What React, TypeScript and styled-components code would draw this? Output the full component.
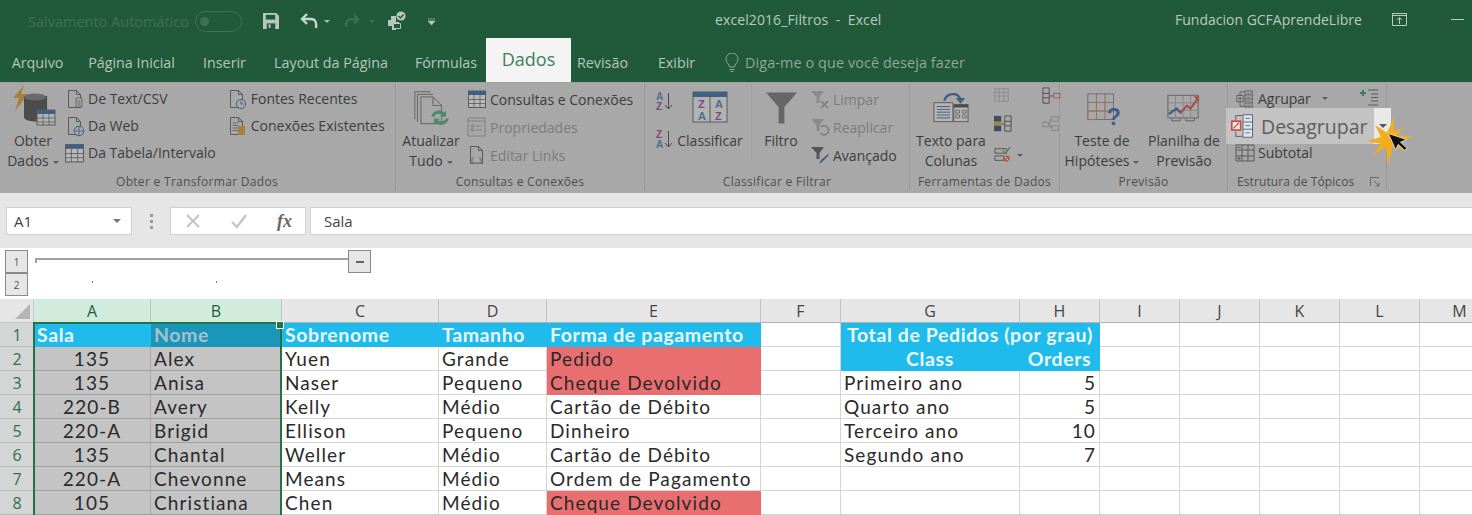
import React from 'react';
import styled, { createGlobalStyle } from 'styled-components';

const GlobalStyle = createGlobalStyle`
  html, body { margin: 0; padding: 0; background: #fff; overflow: hidden; }
  body { font-family: "Open Sans", "Noto Sans", sans-serif; }
  * { box-sizing: border-box; }
`;

const Page = styled.div`
  width: 1472px;
  height: 515px;
  overflow: hidden;
`;

/* ---------- title bar ---------- */

const TitleBar = styled.div`
  height: 38px;
  background: #215a3a;
  display: flex;
  align-items: center;
  color: #b9cabf;
  font-size: 14px;
`;

const QuickAccess = styled.div`
  width: 715px;
  display: flex;
  align-items: center;
  padding: 4px 0 0 28px;
  flex: none;
`;

const AutoSave = styled.span`
  width: 167px;
  color: #3c7353;
  font-size: 14.5px;
  white-space: nowrap;
`;

const Toggle = styled.span`
  width: 47px;
  height: 21px;
  border: 1px solid #3c7353;
  border-radius: 11px;
  display: flex;
  align-items: center;
  padding-left: 4px;
  margin-right: 21px;
  &::before {
    content: '';
    width: 9px;
    height: 9px;
    border-radius: 50%;
    background: #3c7353;
  }
`;

const QaSlot = styled.span<{ $w: number }>`
  width: ${(p) => p.$w}px;
  display: flex;
  align-items: center;
  flex: none;
`;

const Caret = styled.span<{ $c?: string; $ml?: number; $s?: number }>`
  display: inline-block;
  width: 0;
  height: 0;
  border-left: ${(p) => p.$s ?? 3.5}px solid transparent;
  border-right: ${(p) => p.$s ?? 3.5}px solid transparent;
  border-top: ${(p) => p.$s ?? 3.5}px solid ${(p) => p.$c || '#5a5a5a'};
  margin-left: ${(p) => p.$ml ?? 4}px;
  vertical-align: middle;
`;

const DocTitle = styled.span`
  white-space: pre;
  font-size: 14px;
  letter-spacing: 0.1px;
`;

const Account = styled.div`
  margin-left: auto;
  width: 297px;
  display: flex;
  align-items: center;
  flex: none;
  white-space: nowrap;
`;

const AccountName = styled.span`
  width: 217px;
  flex: none;
`;

const Minimize = styled.span`
  width: 13px;
  height: 1px;
  background: #b9cabf;
  margin-left: 44px;
  flex: none;
`;

/* ---------- tab strip ---------- */

const TabStrip = styled.div`
  height: 44px;
  background: #215a3a;
  display: flex;
  align-items: stretch;
`;

const Tab = styled.div<{ $w: number; $active?: boolean; $pl?: number }>`
  width: ${(p) => p.$w}px;
  flex: none;
  display: flex;
  justify-content: center;
  align-items: ${(p) => (p.$active ? 'flex-start' : 'center')};
  padding-top: ${(p) => (p.$active ? 9 : 5)}px;
  padding-left: ${(p) => p.$pl ?? 0}px;
  font-size: ${(p) => (p.$active ? 18 : 14.3)}px;
  color: ${(p) => (p.$active ? '#3f7f5c' : '#b5c6bb')};
  background: ${(p) => (p.$active ? '#f4f4f4' : 'transparent')};
  white-space: nowrap;
`;

const TellMe = styled.div`
  display: flex;
  align-items: center;
  padding: 5px 0 0 5px;
  color: #8fa899;
  font-size: 14.4px;
  gap: 5px;
  letter-spacing: 0.1px;
`;

/* ---------- ribbon ---------- */

const Ribbon = styled.div`
  height: 111px;
  background: #a8a8a8;
  display: flex;
  color: #3d3d3d;
  font-size: 14px;
  border-top: 1px solid #98a89e;
`;

const Group = styled.div<{ $w: number; $plain?: boolean }>`
  width: ${(p) => p.$w}px;
  flex: none;
  display: flex;
  flex-direction: column;
  padding-top: 2px;
  margin-bottom: 3px;
  border-right: ${(p) => (p.$plain ? 'none' : '1px solid #999999')};
`;

const GroupBody = styled.div`
  height: 90px;
  display: flex;
`;

const GroupLabel = styled.div<{ $pr?: number; $left?: boolean }>`
  flex: 1;
  display: flex;
  align-items: center;
  justify-content: ${(p) => (p.$left ? 'flex-start' : 'center')};
  padding-top: 2px;
  padding-right: ${(p) => p.$pr ?? 0}px;
  padding-left: ${(p) => (p.$left ? 9 : 0)}px;
  font-size: 12px;
  letter-spacing: ${(p) => (p.$left ? 0.1 : 0.3)}px;
  color: #4e4e4e;
  white-space: nowrap;
  gap: 16px;
`;

const BigButton = styled.div<{ $w: number; $ml?: number }>`
  width: ${(p) => p.$w}px;
  margin-left: ${(p) => p.$ml ?? 0}px;
  flex: none;
  display: flex;
  flex-direction: column;
  align-items: center;
  text-align: center;
  white-space: nowrap;
`;

const BigIcon = styled.div<{ $pt?: number; $pl?: number }>`
  height: 46px;
  padding-top: ${(p) => p.$pt ?? 0}px;
  padding-left: ${(p) => p.$pl ?? 0}px;
  display: flex;
  align-items: flex-start;
  justify-content: center;
  flex: none;
`;

const BigText = styled.div`
  line-height: 20px;
`;

const SmallStack = styled.div<{ $ml?: number; $mt?: number; $row?: number }>`
  margin-left: ${(p) => p.$ml ?? 0}px;
  margin-top: ${(p) => p.$mt ?? 0}px;
  flex: none;
  display: grid;
  grid-auto-rows: ${(p) => p.$row ?? 27}px;
  align-content: start;
`;

const SmallButton = styled.div<{ $off?: boolean }>`
  display: flex;
  align-items: center;
  gap: 3px;
  white-space: nowrap;
  color: ${(p) => (p.$off ? '#7c7c7c' : 'inherit')};
  position: relative;
`;

const IconSlot = styled.span`
  width: 21px;
  height: 22px;
  display: flex;
  align-items: center;
  justify-content: center;
  flex: none;
`;

const Divider = styled.div<{ $ml: number }>`
  width: 1px;
  height: 76px;
  margin-left: ${(p) => p.$ml}px;
  background: #a0a0a0;
  flex: none;
`;

const DetailSlot = styled.span`
  margin-left: 28px;
  margin-top: -4px;
  display: flex;
`;

/* the enlarged "Desagrupar" button sits on top of the ribbon rows */
const Spotlight = styled.div`
  position: absolute;
  left: -8px;
  top: -4px;
  width: 165px;
  height: 36px;
  background: #c3c3c3;
  display: flex;
  align-items: center;
  padding-left: 5px;
  color: #5d5d5d;
  font-size: 19.5px;
  gap: 6px;
  z-index: 2;
`;

const SpotlightArrow = styled.span`
  position: absolute;
  right: 0;
  top: 0;
  width: 17px;
  height: 100%;
  background: #e8e8e8;
  display: flex;
  align-items: center;
  justify-content: center;
`;

const Burst = styled.svg`
  position: absolute;
  left: 133px;
  top: 5px;
  z-index: 3;
`;

/* ---------- formula bar ---------- */

const FormulaBar = styled.div`
  height: 55px;
  background: #e6e6e6;
  display: flex;
  padding: 14px 0 13px 6px;
`;

const Field = styled.div<{ $w?: number }>`
  width: ${(p) => (p.$w ? `${p.$w}px` : 'auto')};
  flex: ${(p) => (p.$w ? 'none' : '1')};
  background: #fff;
  border: 1px solid #d0d0d0;
  display: flex;
  align-items: center;
  font-size: 15px;
  color: #444;
`;

const NameBox = styled(Field)`
  padding: 0 10px 0 7px;
  justify-content: space-between;
`;

const Grip = styled.div`
  width: 38px;
  flex: none;
  display: flex;
  flex-direction: column;
  align-items: center;
  justify-content: center;
  gap: 3px;
  & > i {
    width: 3px;
    height: 3px;
    background: #9c9c9c;
    display: block;
  }
`;

const FormulaButtons = styled(Field)`
  padding-left: 14px;
  gap: 29px;
  margin-right: 4px;
`;

const FxLabel = styled.span`
  font-family: "Liberation Serif", serif;
  font-style: italic;
  font-weight: 700;
  font-size: 18px;
  color: #666;
`;

const FormulaText = styled(Field)`
  padding-left: 13px;
  border-right: none;
`;

/* ---------- outline gutter ---------- */

const Outline = styled.div`
  height: 51px;
  background: #fff;
  display: flex;
`;

const Levels = styled.div`
  width: 35px;
  flex: none;
  padding: 2px 0 0 5px;
`;

const LevelButton = styled.div`
  width: 23px;
  height: 23px;
  background: #e6e6e6;
  border: 1px solid #8a8a8a;
  font-size: 10px;
  color: #555;
  display: flex;
  align-items: center;
  justify-content: center;
`;

const OutlineTrack = styled.div`
  padding-top: 2px;
`;

const BracketRow = styled.div`
  display: flex;
  align-items: flex-start;
`;

const Bracket = styled.div`
  width: 313px;
  height: 5px;
  margin-top: 8px;
  border-top: 2px solid #a0a0a0;
  border-left: 2px solid #a0a0a0;
`;

const Collapse = styled.div`
  width: 23px;
  height: 23px;
  background: #e6e6e6;
  border: 1px solid #8a8a8a;
  display: flex;
  align-items: center;
  justify-content: center;
  &::before {
    content: '';
    width: 8px;
    height: 2px;
    background: #666;
  }
`;

const DotRow = styled.div`
  display: flex;
  margin-top: 8px;
  padding-left: 57px;
  gap: 123px;
  & > i {
    width: 1px;
    height: 2px;
    background: #777;
    display: block;
  }
`;

/* ---------- sheet ---------- */

const Sheet = styled.div`
  position: relative;
  display: grid;
  grid-template-columns: 34px 117px 131px 157px 108px 214px 80px 179px 80px 80px 80px 80px 80px 80px;
  grid-auto-rows: 24px;
  background: #fff;
`;

const Corner = styled.div`
  background: #e6e6e6;
  border-right: 1px solid #c6c6c6;
  border-bottom: 1px solid #c6c6c6;
  position: relative;
  &::after {
    content: '';
    position: absolute;
    right: 3px;
    bottom: 3px;
    width: 0;
    height: 0;
    border-left: 15px solid transparent;
    border-bottom: 15px solid #b4b4b4;
  }
`;

const ColHead = styled.div<{ $sel?: boolean }>`
  background: ${(p) => (p.$sel ? '#d1ecdc' : '#e6e6e6')};
  border-right: 1px solid #c2c2c2;
  border-bottom: 1px solid ${(p) => (p.$sel ? '#217346' : '#b4b4b4')};
  color: ${(p) => (p.$sel ? '#1d5c3b' : '#444')};
  font-size: 16px;
  display: flex;
  align-items: center;
  justify-content: center;
`;

const RowHead = styled.div`
  background: #d3d6d4;
  border-bottom: 1px solid #b9b9b9;
  color: #2f6f4e;
  font-size: 16px;
  display: flex;
  align-items: center;
  justify-content: center;
`;

type Tone = 'plain' | 'head' | 'headSel' | 'sel' | 'red';

const toneBg: Record<Tone, string> = {
  plain: '#ffffff',
  head: '#1fbbec',
  headSel: '#1a96b8',
  sel: '#c4c4c4',
  red: '#e96e70',
};

const isHead = (t: Tone) => t === 'head' || t === 'headSel';

const Cell = styled.div<{ $tone: Tone; $align?: string; $span?: number }>`
  grid-column: span ${(p) => p.$span ?? 1};
  background: ${(p) => toneBg[p.$tone]};
  border-right: 1px solid ${(p) => (p.$tone === 'plain' ? '#d4d4d4' : p.$tone === 'sel' ? '#a8a8a8' : 'transparent')};
  border-bottom: 1px solid ${(p) => (p.$tone === 'plain' ? '#d4d4d4' : p.$tone === 'sel' ? '#a0a0a0' : 'transparent')};
  font-family: Lato, "Open Sans", sans-serif;
  font-size: ${(p) => (isHead(p.$tone) ? 19.5 : 19)}px;
  letter-spacing: ${(p) => (isHead(p.$tone) ? 0.6 : 1.1)}px;
  font-weight: ${(p) => (isHead(p.$tone) ? 700 : 400)};
  color: ${(p) => (p.$tone === 'head' ? '#eaf8fd' : p.$tone === 'headSel' ? '#a9bfd0' : '#2a2a2a')};
  display: flex;
  align-items: center;
  justify-content: ${(p) => p.$align || 'flex-start'};
  padding: 0 3px 1px 3px;
  white-space: nowrap;
  overflow: visible;
  position: relative;
`;

const Selection = styled.div`
  position: absolute;
  left: 33px;
  top: 23px;
  width: 249px;
  height: 200px;
  border: 2px solid #217346;
  pointer-events: none;
  &::after {
    content: '';
    position: absolute;
    right: -4px;
    top: -3px;
    width: 6px;
    height: 6px;
    background: #217346;
    border: 1px solid #fff;
  }
`;

/* ---------- icons ---------- */

const L = '#5b5b5b';
const B = '#3f5f86';
const LETTER_FONT = 'Liberation Sans';

const PageShape = ({ c = L }: { c?: string }) => (
  <path d="M3.5 1.5h8l4 4v13h-12z M11.5 1.5v4h4" fill="none" stroke={c} strokeWidth="1" />
);

const DocIcon = ({ children }: { children?: React.ReactNode }) => (
  <svg width="20" height="22" viewBox="0 0 20 20">
    <PageShape />
    {children}
  </svg>
);

const TableIcon = ({ size = 22, head = B }: { size?: number; head?: string }) => (
  <svg width={size} height={size} viewBox="0 0 20 20">
    <rect x="1.5" y="2" width="17" height="16.5" fill="#b8b8b8" stroke={L} />
    <rect x="1.5" y="2" width="17" height="4" fill={head} />
    <path d="M1.5 10.5h17M1.5 14.5h17M7 6v12.5M13 6v12.5" stroke={L} strokeWidth="0.8" />
  </svg>
);

const ObterIcon = () => (
  <svg width="48" height="44" viewBox="0 0 48 44">
    <path d="M15 0 L4 13 h6 L6 26 L19 9 h-7z" fill="#a8803c" />
    <path d="M10 12 v21 c0 6 33 6 33 0 V12z" fill="#4c4c4c" transform="translate(1 -1) scale(0.7 1) translate(10 0)" />
    <ellipse cx="26" cy="12" rx="11" ry="3.5" fill="#6a6a6a" />
    <rect x="28" y="25" width="18" height="15" fill="#b4b4b4" stroke={L} />
    <rect x="28" y="25" width="18" height="4" fill={B} />
    <path d="M28 33h18M28 37h18M34 29v11M40 29v11" stroke={L} strokeWidth="0.8" />
  </svg>
);

const RefreshIcon = () => (
  <svg width="38" height="38" viewBox="0 0 44 44">
    <path d="M1 2h18M1 2v32M4 5h18M4 5v32M8 8h14l10 10v21H8z M22 8v10h10" fill="#a8a8a8" stroke={L} />
    <path d="M20 31a9 9 0 0 1 15-5l2-2v7h-7l2-2a6 6 0 0 0-9 2z" fill="#4e8a6a" />
    <path d="M40 33a9 9 0 0 1-15 5l-2 2v-7h7l-2 2a6 6 0 0 0 9-2z" fill="#4e8a6a" />
  </svg>
);

const SortSmall = ({ up }: { up: boolean }) => (
  <svg width="20" height="22" viewBox="0 0 20 22">
    <text x="1" y="10" fontSize="10" fontWeight="700" fontFamily={LETTER_FONT} fill={up ? '#4b6d94' : '#7b4b80'}>{up ? 'A' : 'Z'}</text>
    <text x="1" y="20" fontSize="10" fontWeight="700" fontFamily={LETTER_FONT} fill={up ? '#7b4b80' : '#4b6d94'}>{up ? 'Z' : 'A'}</text>
    <path d="M13.5 3v16M10 15l3.5 4 3.5-4" fill="none" stroke="#4a4a4a" />
  </svg>
);

const SortBig = () => (
  <svg width="36" height="32" viewBox="0 0 36 32">
    <rect x="1" y="1" width="34" height="30" fill="#b2b2b2" stroke={L} />
    <rect x="1" y="1" width="34" height="5" fill={B} />
    <path d="M18 6v25" stroke={L} />
    <text x="6" y="17" fontSize="11" fontWeight="700" fontFamily={LETTER_FONT} fill="#7b4b80">Z</text>
    <text x="6" y="29" fontSize="11" fontWeight="700" fontFamily={LETTER_FONT} fill="#4b6d94">A</text>
    <text x="23" y="17" fontSize="11" fontWeight="700" fontFamily={LETTER_FONT} fill="#4b6d94">A</text>
    <text x="23" y="29" fontSize="11" fontWeight="700" fontFamily={LETTER_FONT} fill="#7b4b80">Z</text>
  </svg>
);

const FunnelBig = () => (
  <svg width="33" height="33" viewBox="0 0 34 33">
    <path d="M1 1h32L20 16v17h-6V16z" fill="#666" />
  </svg>
);

const FunnelSmall = ({ off, children }: { off?: boolean; children?: React.ReactNode }) => (
  <svg width="20" height="20" viewBox="0 0 20 20">
    <path d="M1 2h13L9.5 8v6h-3V8z" fill={off ? '#8a8a8a' : '#555'} />
    {children}
  </svg>
);

const TextColumnsIcon = () => (
  <svg width="36" height="33" viewBox="0 0 38 34">
    <rect x="1" y="13" width="20" height="20" fill="#b4b4b4" stroke={L} />
    <path d="M4 17h14M4 20h14M4 23h14M4 26h14M4 29h14" stroke="#4a5d78" />
    <rect x="22" y="15" width="15" height="18" fill="#b4b4b4" stroke={L} />
    <rect x="22" y="15" width="15" height="3" fill="#4a4a4a" />
    <path d="M24 21h4v3h-4zM31 21h4v3h-4zM24 26h4v3h-4zM31 26h4v3h-4z" fill="none" stroke={L} strokeWidth="0.8" />
    <path d="M12 11C14 3 25 1 29 9" fill="none" stroke={B} strokeWidth="2.4" />
    <path d="M24 8h10l-5 6z" fill={B} />
  </svg>
);

const ToolIcon = ({ kind }: { kind: number }) => (
  <svg width="20" height="18" viewBox="0 0 22 20">
    {kind === 0 && (
      <path d="M2 2h15v14H2zM2 6h15M2 10h15M7 2v14M12 2v14" fill="none" stroke="#8c8c8c" />
    )}
    {kind === 1 && (
      <g fill="none">
        <path d="M2 1h7v17H2zM2 7h7M2 12h7" stroke="#4a4a4a" />
        <path d="M10 10h3" stroke="#4a4a4a" />
        <rect x="14" y="7" width="7" height="5" stroke="#a8524a" />
      </g>
    )}
    {kind === 2 && (
      <g>
        <rect x="1" y="1" width="8" height="17" fill="#3d4d62" />
        <rect x="1" y="7" width="8" height="5" fill="#9a8a52" />
        <path d="M13 1h7v17h-7zM13 7h7M13 12h7" fill="none" stroke="#4a4a4a" />
        <path d="M9.5 10h3" stroke="#4a4a4a" />
      </g>
    )}
    {kind === 3 && (
      <g fill="none" stroke="#838383">
        <rect x="2" y="8" width="6" height="5" />
        <rect x="12" y="2" width="7" height="5" />
        <rect x="12" y="12" width="7" height="5" />
        <path d="M8 10h2V5h2M10 10v4h2" />
      </g>
    )}
    {kind === 4 && (
      <g>
        <path d="M2 3h13v5H2zM2 11h10v5H2z" fill="none" stroke="#555" />
        <path d="M11 5l3 3 5-7" fill="none" stroke="#4e8a6a" strokeWidth="1.6" />
        <circle cx="15" cy="14" r="3.5" fill="#b15a50" />
        <path d="M13 12l4 4" stroke="#ddd" />
      </g>
    )}
  </svg>
);

const WhatIfIcon = () => (
  <svg width="36" height="36" viewBox="0 0 42 42">
    <rect x="1" y="1" width="30" height="30" fill="none" stroke="#6d625c" />
    <path d="M1 11h30M1 21h30M11 1v30M21 1v30" stroke="#6d625c" strokeWidth="0.8" />
    <path d="M11 11h10v10H11z" fill="none" stroke="#a1705c" />
    <path d="M1 21h10v10H1z" fill="none" stroke="#a1705c" />
    <text x="23" y="37" fontSize="27" fontWeight="700" fontFamily={LETTER_FONT} fill={B}>?</text>
  </svg>
);

const ForecastIcon = () => (
  <svg width="34" height="31" viewBox="0 0 36 32">
    <rect x="1" y="2" width="32" height="24" fill="none" stroke="#606060" />
    <path d="M1 10h32M1 18h32M9 2v24M17 2v24M25 2v24" stroke="#7a7a7a" strokeWidth="0.7" />
    <path d="M2 22l8-6 5 5" fill="none" stroke={B} strokeWidth="2.4" />
    <path d="M14 21l7-8 4 3 8-11" fill="none" stroke="#a84e42" strokeWidth="2.2" />
    <path d="M28 3h6v6z" fill="#a84e42" />
    <path d="M5 26v3h9v-3M20 26v3h9v-3" fill="none" stroke="#606060" />
  </svg>
);

const OutlineRows = ({ mark }: { mark: React.ReactNode }) => (
  <svg width="18" height="20" viewBox="0 0 20 20">
    {mark}
    <rect x="10" y="1" width="8" height="18" fill="none" stroke={L} />
    <path d="M10 5.5h8M10 10h8M10 14.5h8" stroke={L} />
    <path d="M12 3.5h4M12 8h4M12 12.5h4M12 17h4" stroke={L} strokeWidth="0.8" />
  </svg>
);

const plusBox = (
  <g fill="none" stroke={L}>
    <rect x="1" y="6" width="7" height="7" />
    <path d="M2.5 9.5h4M4.5 7.5v4" />
    <path d="M4.5 6V2h5M4.5 13v5h5" />
  </g>
);

const UngroupIcon = () => (
  <svg width="24" height="24" viewBox="0 0 30 30">
    <path d="M6 8V2h8M6 22v6h8" fill="none" stroke="#4a4a4a" />
    <rect x="1" y="9" width="11" height="11" fill="#eee" stroke="#d0453a" strokeWidth="2" />
    <path d="M3 18l7-7" stroke="#d0453a" strokeWidth="1.6" />
    <rect x="15" y="1" width="12" height="28" fill="#dfe6ea" stroke="#3f4f5f" />
    <path d="M15 10h12M15 19h12" stroke="#3f4f5f" />
    <path d="M18 5.5h6M18 14.5h6M18 23.5h6" stroke="#4a7aa8" strokeWidth="1.2" />
  </svg>
);

const SubtotalIcon = () => (
  <svg width="20" height="20" viewBox="0 0 20 20">
    <path d="M1 2h18v16H1zM7 2v16M13 2v16M1 7h18M1 13h18" fill="none" stroke={L} />
    <path d="M2.5 4.5h3M2.5 15.5h3M4 14v3" stroke={L} />
  </svg>
);

const ShowDetailIcon = () => (
  <svg width="20" height="18" viewBox="0 0 20 18">
    <path d="M1 5h6M4 2v6" stroke="#3f7a5b" strokeWidth="2" />
    <path d="M9 2h10M12 6h7M12 9.5h7M12 13h7M9 17h10" stroke={L} />
  </svg>
);

const Launcher = () => (
  <svg width="10" height="10" viewBox="0 0 10 10">
    <path d="M0.5 9V0.5H9" fill="none" stroke="#666" />
    <path d="M4 4l4.5 4.5M9 5.5V9H5.5" fill="none" stroke="#666" />
  </svg>
);

const Lamp = () => (
  <svg width="16" height="20" viewBox="0 0 16 20">
    <path d="M5.5 14c0-3-3.5-4-3.5-8a6 6 0 0 1 12 0c0 4-3.5 5-3.5 8zM5.5 16.5h5M6.5 18.5h3" fill="none" stroke="#8fa899" />
  </svg>
);

const CheckOut = () => (
  <svg width="20" height="20" viewBox="0 0 20 20">
    <circle cx="14" cy="5" r="4.6" fill="#b8c6bd" />
    <path d="M11.5 5l2 2 3-3.5" fill="none" stroke="#215a3a" strokeWidth="1.4" />
    <path d="M1 9h3V5h5v6h3v4h-3v4H5v-4H1z" fill="#b8c6bd" />
    <path d="M6.5 12.5h7v5h-7z" fill="#215a3a" stroke="#b8c6bd" />
  </svg>
);

const cols = ['A', 'B', 'C', 'D', 'E', 'F', 'G', 'H', 'I', 'J', 'K', 'L', 'M'];

type Row = {
  sala: string;
  nome: string;
  sobrenome: string;
  tamanho: string;
  pagamento: string;
  classe?: string;
  orders?: string;
};

const rows: Row[] = [
  { sala: '135', nome: 'Alex', sobrenome: 'Yuen', tamanho: 'Grande', pagamento: 'Pedido' },
  { sala: '135', nome: 'Anisa', sobrenome: 'Naser', tamanho: 'Pequeno', pagamento: 'Cheque Devolvido', classe: 'Primeiro ano', orders: '5' },
  { sala: '220-B', nome: 'Avery', sobrenome: 'Kelly', tamanho: 'Médio', pagamento: 'Cartão de Débito', classe: 'Quarto ano', orders: '5' },
  { sala: '220-A', nome: 'Brigid', sobrenome: 'Ellison', tamanho: 'Pequeno', pagamento: 'Dinheiro', classe: 'Terceiro ano', orders: '10' },
  { sala: '135', nome: 'Chantal', sobrenome: 'Weller', tamanho: 'Médio', pagamento: 'Cartão de Débito', classe: 'Segundo ano', orders: '7' },
  { sala: '220-A', nome: 'Chevonne', sobrenome: 'Means', tamanho: 'Médio', pagamento: 'Ordem de Pagamento' },
  { sala: '105', nome: 'Christiana', sobrenome: 'Chen', tamanho: 'Médio', pagamento: 'Cheque Devolvido' },
];

const Blanks = ({ n }: { n: number }) => (
  <>
    {Array.from({ length: n }, (_, i) => (
      <Cell key={i} $tone="plain" />
    ))}
  </>
);

const App = () => {
  return (
    <Page>
      <GlobalStyle />
      <TitleBar>
        <QuickAccess>
          <AutoSave>Salvamento Automático</AutoSave>
          <Toggle />
          <QaSlot $w={37}>
            <svg width="16" height="16" viewBox="0 0 17 17">
              <path d="M0 0h14l3 3v14H0z" fill="#b8c6bd" />
              <path d="M3 2h10v5H3z" fill="#215a3a" />
              <path d="M4 11h9v6H4z" fill="#215a3a" />
              <path d="M6 12h2v4H6z" fill="#b8c6bd" />
            </svg>
          </QaSlot>
          <QaSlot $w={43}>
            <svg width="20" height="18" viewBox="0 0 20 18">
              <path d="M7 2L2 7l5 5" fill="none" stroke="#c9d6ce" strokeWidth="2.4" />
              <path d="M3 7h8c4 0 6 3 5 9" fill="none" stroke="#c9d6ce" strokeWidth="2.4" />
            </svg>
            <Caret $c="#a9bcb0" $ml={4} />
          </QaSlot>
          <QaSlot $w={44}>
            <svg width="17" height="16" viewBox="0 0 20 18">
              <path d="M13 2l5 5-5 5" fill="none" stroke="#3c7353" strokeWidth="2.4" />
              <path d="M17 7H9c-4 0-6 3-5 9" fill="none" stroke="#3c7353" strokeWidth="2.4" />
            </svg>
            <Caret $c="#3c7353" $ml={9} />
          </QaSlot>
          <QaSlot $w={41}>
            <CheckOut />
          </QaSlot>
          <QaSlot $w={10}>
            <svg width="7" height="7" viewBox="0 0 7 7">
              <path d="M0 1h7M0 3h7L3.5 7z" fill="#b8c6bd" stroke="#b8c6bd" strokeWidth="0.6" />
            </svg>
          </QaSlot>
        </QuickAccess>
        <DocTitle>excel2016_Filtros  -  Excel</DocTitle>
        <Account>
          <AccountName>Fundacion GCFAprendeLibre</AccountName>
          <svg width="15" height="13" viewBox="0 0 15 13">
            <path d="M.5.5h14v12H.5zM.5 2.5h14M7.5 11V5M5 7l2.5-2.5L10 7" fill="none" stroke="#b9cabf" />
          </svg>
          <Minimize />
        </Account>
      </TitleBar>

      <TabStrip>
        <Tab $w={75}>Arquivo</Tab>
        <Tab $w={113}>Página Inicial</Tab>
        <Tab $w={73}>Inserir</Tab>
        <Tab $w={140}>Layout da Página</Tab>
        <Tab $w={85} $pl={5}>Fórmulas</Tab>
        <Tab $w={85} $active>Dados</Tab>
        <Tab $w={63}>Revisão</Tab>
        <Tab $w={85}>Exibir</Tab>
        <TellMe>
          <Lamp />
          Diga-me o que você deseja fazer
        </TellMe>
      </TabStrip>

      <Ribbon>
        <Group $w={396}>
          <GroupBody>
            <BigButton $w={62} $ml={2}>
              <BigIcon><ObterIcon /></BigIcon>
              <BigText>Obter<br />Dados<Caret /></BigText>
            </BigButton>
            <SmallStack>
              <SmallButton>
                <IconSlot>
                  <DocIcon><path d="M11 9h6v9h-6zM12.5 12h3M12.5 14h3M12.5 16h3" fill="#a8a8a8" stroke={L} strokeWidth="0.8" /></DocIcon>
                </IconSlot>
                De Text/CSV
              </SmallButton>
              <SmallButton>
                <IconSlot>
                  <DocIcon>
                    <circle cx="14" cy="15" r="4.8" fill="#a8a8a8" stroke={B} />
                    <path d="M9.5 15h9M14 10.5v9" stroke={B} strokeWidth="0.8" />
                  </DocIcon>
                </IconSlot>
                Da Web
              </SmallButton>
              <SmallButton>
                <IconSlot><TableIcon /></IconSlot>
                Da Tabela/Intervalo
              </SmallButton>
            </SmallStack>
            <SmallStack $ml={11}>
              <SmallButton>
                <IconSlot>
                  <DocIcon>
                    <circle cx="14" cy="15" r="4.6" fill="#a8a8a8" stroke={B} />
                    <path d="M14 12v3h2.5" fill="none" stroke={B} strokeWidth="0.9" />
                  </DocIcon>
                </IconSlot>
                Fontes Recentes
              </SmallButton>
              <SmallButton>
                <IconSlot>
                  <DocIcon>
                    <path d="M5.5 7h6M5.5 9.5h6M5.5 12h6M5.5 14.5h6" stroke={L} strokeWidth="0.8" />
                    <rect x="11" y="10" width="7" height="9" fill="#a8803c" />
                  </DocIcon>
                </IconSlot>
                Conexões Existentes
              </SmallButton>
            </SmallStack>
          </GroupBody>
          <GroupLabel $pr={1}>Obter e Transformar Dados</GroupLabel>
        </Group>

        <Group $w={249}>
          <GroupBody>
            <BigButton $w={66} $ml={2}>
              <BigIcon $pt={5} $pl={4}><RefreshIcon /></BigIcon>
              <BigText>Atualizar<br />Tudo<Caret /></BigText>
            </BigButton>
            <SmallStack $row={28} $ml={2}>
              <SmallButton>
                <IconSlot><TableIcon size={20} /></IconSlot>
                Consultas e Conexões
              </SmallButton>
              <SmallButton $off>
                <IconSlot>
                  <svg width="19" height="20" viewBox="0 0 19 20">
                    <path d="M1 1h17v18H1zM1 4h17M4 8h3v2H4zM9 9h6M4 12h3v2H4zM9 13h6" fill="none" stroke="#808080" />
                  </svg>
                </IconSlot>
                Propriedades
              </SmallButton>
              <SmallButton $off>
                <IconSlot>
                  <DocIcon>
                    <path d="M7 13c-3 0-3 5 0 5h5c3 0 3-5 0-5" fill="none" stroke="#708878" strokeWidth="1.4" />
                  </DocIcon>
                </IconSlot>
                Editar Links
              </SmallButton>
            </SmallStack>
          </GroupBody>
          <GroupLabel>Consultas e Conexões</GroupLabel>
        </Group>

        <Group $w={265}>
          <GroupBody>
            <SmallStack $ml={9} $mt={5} $row={38}>
              <IconSlot><SortSmall up /></IconSlot>
              <IconSlot><SortSmall up={false} /></IconSlot>
            </SmallStack>
            <BigButton $w={70}>
              <BigIcon $pt={6}><SortBig /></BigIcon>
              <BigText>Classificar</BigText>
            </BigButton>
            <Divider $ml={6} />
            <BigButton $w={58}>
              <BigIcon $pt={6}><FunnelBig /></BigIcon>
              <BigText>Filtro</BigText>
            </BigButton>
            <SmallStack $row={28} $ml={-1}>
              <SmallButton $off>
                <IconSlot>
                  <FunnelSmall off>
                    <path d="M11 12l7 7M18 12l-7 7" stroke="#7c7c7c" strokeWidth="1.6" />
                  </FunnelSmall>
                </IconSlot>
                Limpar
              </SmallButton>
              <SmallButton $off>
                <IconSlot>
                  <FunnelSmall off>
                    <path d="M11 10a4.5 4.5 0 1 1-.5 6" fill="none" stroke="#7c7c7c" strokeWidth="1.4" />
                  </FunnelSmall>
                </IconSlot>
                Reaplicar
              </SmallButton>
              <SmallButton>
                <IconSlot>
                  <FunnelSmall>
                    <path d="M9 19l2-4 7-6 1 1-7 7z" fill={B} />
                  </FunnelSmall>
                </IconSlot>
                Avançado
              </SmallButton>
            </SmallStack>
          </GroupBody>
          <GroupLabel>Classificar e Filtrar</GroupLabel>
        </Group>

        <Group $w={150}>
          <GroupBody>
            <BigButton $w={82}>
              <BigIcon $pt={5}><TextColumnsIcon /></BigIcon>
              <BigText>Texto para<br />Colunas</BigText>
            </BigButton>
            <SmallStack $row={28}>
              <IconSlot><ToolIcon kind={0} /></IconSlot>
              <IconSlot><ToolIcon kind={2} /></IconSlot>
              <SmallButton>
                <IconSlot><ToolIcon kind={4} /></IconSlot>
                <Caret $ml={1} />
              </SmallButton>
            </SmallStack>
            <SmallStack $ml={17} $row={28}>
              <IconSlot><ToolIcon kind={1} /></IconSlot>
              <IconSlot><ToolIcon kind={3} /></IconSlot>
            </SmallStack>
          </GroupBody>
          <GroupLabel>Ferramentas de Dados</GroupLabel>
        </Group>

        <Group $w={168}>
          <GroupBody>
            <BigButton $w={84}>
              <BigIcon $pt={8} $pl={6}><WhatIfIcon /></BigIcon>
              <BigText>Teste de<br />Hipóteses<Caret /></BigText>
            </BigButton>
            <BigButton $w={80}>
              <BigIcon $pt={8}><ForecastIcon /></BigIcon>
              <BigText>Planilha de<br />Previsão</BigText>
            </BigButton>
          </GroupBody>
          <GroupLabel>Previsão</GroupLabel>
        </Group>

        <Group $w={159}>
          <GroupBody>
            <SmallStack $ml={6}>
              <SmallButton>
                <IconSlot><OutlineRows mark={plusBox} /></IconSlot>
                Agrupar
                <Caret $ml={8} />
                <DetailSlot><ShowDetailIcon /></DetailSlot>
              </SmallButton>
              <SmallButton>
                <Spotlight>
                  <UngroupIcon />
                  Desagrupar
                  <SpotlightArrow><Caret $c="#555" $ml={0} $s={4.5} /></SpotlightArrow>
                </Spotlight>
                <Burst width="46" height="48" viewBox="0 0 46 48">
                  <path
                    d="M27 0 L27 15 L36 10 L30 18 L46 20 L31 25 L38 34 L26 29 L21 48 L19 30 L6 38 L14 27 L0 24 L14 20 L8 8 L20 16z"
                    fill="#f5ad1c"
                  />
                  <path d="M17 14 L17 32 L21.5 28 L25 36 L28 35 L24.5 27 L31 27z" fill="#111" stroke="#eee" strokeWidth="0.7" transform="rotate(-24 17 14) translate(3 4)" />
                </Burst>
              </SmallButton>
              <SmallButton>
                <IconSlot><SubtotalIcon /></IconSlot>
                Subtotal
              </SmallButton>
            </SmallStack>
          </GroupBody>
          <GroupLabel $left>
            Estrutura de Tópicos
            <Launcher />
          </GroupLabel>
        </Group>
        <Group $w={85} $plain />
      </Ribbon>

      <FormulaBar>
        <NameBox $w={126}>
          A1
          <Caret $c="#777" $ml={0} $s={4} />
        </NameBox>
        <Grip><i /><i /><i /></Grip>
        <FormulaButtons $w={136}>
          <svg width="16" height="16" viewBox="0 0 16 16">
            <path d="M2 2l12 12M14 2L2 14" stroke="#c4c4c4" strokeWidth="2" />
          </svg>
          <svg width="18" height="16" viewBox="0 0 18 16">
            <path d="M2 9l5 5L16 2" fill="none" stroke="#c4c4c4" strokeWidth="2.4" />
          </svg>
          <FxLabel>fx</FxLabel>
        </FormulaButtons>
        <FormulaText>Sala</FormulaText>
      </FormulaBar>

      <Outline>
        <Levels>
          <LevelButton>1</LevelButton>
          <LevelButton>2</LevelButton>
        </Levels>
        <OutlineTrack>
          <BracketRow>
            <Bracket />
            <Collapse />
          </BracketRow>
          <DotRow><i /><i /></DotRow>
        </OutlineTrack>
      </Outline>

      <Sheet>
        <Corner />
        {cols.map((c, i) => (
          <ColHead key={c} $sel={i < 2}>{c}</ColHead>
        ))}

        <RowHead>1</RowHead>
        <Cell $tone="head">Sala</Cell>
        <Cell $tone="headSel">Nome</Cell>
        <Cell $tone="head">Sobrenome</Cell>
        <Cell $tone="head">Tamanho</Cell>
        <Cell $tone="head">Forma de pagamento</Cell>
        <Cell $tone="plain" />
        <Cell $tone="head" $span={2} $align="center">Total de Pedidos (por grau)</Cell>
        <Blanks n={5} />

        {rows.map((r, i) => (
          <React.Fragment key={r.nome}>
            <RowHead>{i + 2}</RowHead>
            <Cell $tone="sel" $align="center">{r.sala}</Cell>
            <Cell $tone="sel">{r.nome}</Cell>
            <Cell $tone="plain">{r.sobrenome}</Cell>
            <Cell $tone="plain">{r.tamanho}</Cell>
            <Cell $tone={r.pagamento === 'Pedido' || r.pagamento === 'Cheque Devolvido' ? 'red' : 'plain'}>
              {r.pagamento}
            </Cell>
            <Cell $tone="plain" />
            {i === 0 ? (
              <>
                <Cell $tone="head" $align="center">Class</Cell>
                <Cell $tone="head" $align="center">Orders</Cell>
              </>
            ) : (
              <>
                <Cell $tone="plain">{r.classe}</Cell>
                <Cell $tone="plain" $align="flex-end">{r.orders}</Cell>
              </>
            )}
            <Blanks n={5} />
          </React.Fragment>
        ))}
        <Selection />
      </Sheet>
    </Page>
  );
};

export default App;
